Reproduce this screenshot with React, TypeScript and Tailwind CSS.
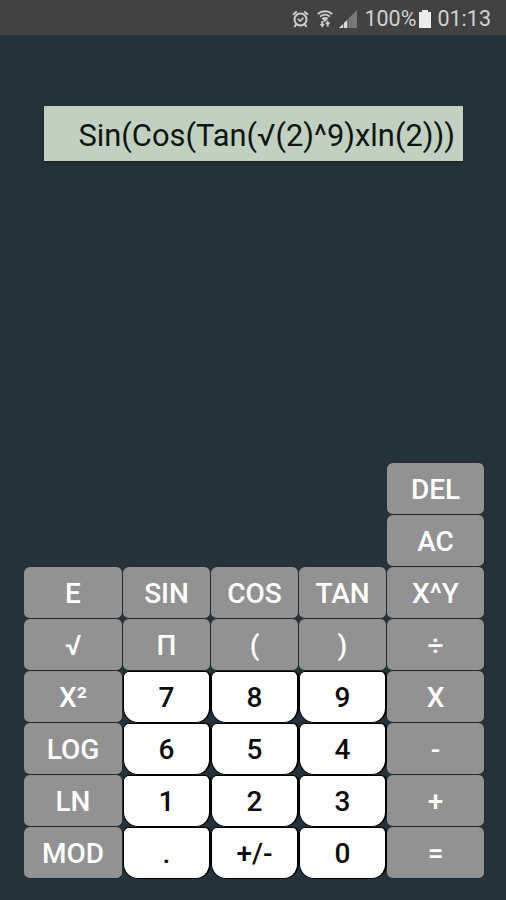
import clsx from "clsx";

type Key = {
  label: string;
  variant?: "light" | "dark";
};

const dark = (label: string): Key => ({ label, variant: "dark" });
const light = (label: string): Key => ({ label, variant: "light" });

// null leaves an empty cell in the keypad
const rows: (Key | null)[][] = [
  [null, null, null, null, dark("DEL")],
  [null, null, null, null, dark("AC")],
  [dark("E"), dark("SIN"), dark("COS"), dark("TAN"), dark("X^Y")],
  [dark("√"), dark("Π"), dark("("), dark(")"), dark("÷")],
  [dark("X²"), light("7"), light("8"), light("9"), dark("X")],
  [dark("LOG"), light("6"), light("5"), light("4"), dark("-")],
  [dark("LN"), light("1"), light("2"), light("3"), dark("+")],
  [dark("MOD"), light("."), light("+/-"), light("0"), dark("=")],
];

function AlarmIcon() {
  return (
    <svg width="17" height="18" viewBox="0 0 17 18" fill="none" stroke="#cdcdcd">
      <circle cx="8.5" cy="9.5" r="6" strokeWidth="2" />
      <path d="M1 4.8 4.8 1.4M16 4.8l-3.8-3.4M4.2 14.4 2.4 17M12.8 14.4l1.8 2.6" strokeWidth="2" />
      <path d="m5.8 8.8 2.3 2.3 3.4-3.4" strokeWidth="1.6" />
    </svg>
  );
}

function WifiIcon() {
  return (
    <svg width="16" height="18" viewBox="0 0 16 18" fill="none" stroke="#cdcdcd">
      <path d="M.8 4C4.8.4 11.2.4 15.2 4" strokeWidth="2" />
      <path d="M3 6.6c3-2.4 7-2.4 10 0" strokeWidth="1.7" />
      <path d="M4.6 8.2c2-1.6 4.8-1.6 6.8 0L8 12.2z" fill="#cdcdcd" stroke="none" />
      <path d="M5.3 11v4M10.7 12.6v4" strokeWidth="2" />
      <path d="M2.8 14h5l-2.5 3.8zM8.2 14h5l-2.5-3.6z" fill="#cdcdcd" stroke="none" />
    </svg>
  );
}

function SignalIcon() {
  return (
    <svg width="18" height="18" viewBox="0 0 18 18">
      <path d="M0 18 18 0v18z" fill="#787878" />
      <path d="M0 18 8.6 9.4V18z" fill="#dcdcdc" />
      <path d="M4.4 12v6M8.8 8v10" stroke="#424242" strokeWidth=".8" />
    </svg>
  );
}

function BatteryIcon() {
  return (
    <svg width="12" height="18" viewBox="0 0 12 18" fill="#ececec">
      <path d="M3 0h6v2h3v16H0V2h3z" />
    </svg>
  );
}

function StatusBar() {
  return (
    <header className="flex h-[35px] items-center justify-end bg-[#424242] pr-[15px] pt-[2px] text-[21.5px] leading-none text-[#d2d2d2]">
      <AlarmIcon />
      <span className="ml-[8px]">
        <WifiIcon />
      </span>
      <span className="ml-[6px]">
        <SignalIcon />
      </span>
      <span className="ml-[7px]">100%</span>
      <span className="ml-[3px]">
        <BatteryIcon />
      </span>
      <span className="ml-[6px]">01:13</span>
    </header>
  );
}

function KeyButton({ label, variant }: Key) {
  return (
    <button
      className={clsx(
        "flex items-center justify-center pt-[2px] text-[28px] font-medium leading-none",
        variant === "light"
          ? "rounded-t-[6px] rounded-b-[15px] border border-r-2 border-black bg-[#fdfdfd] text-[#0c0c0c]"
          : "rounded-[6px] border-r border-b border-[#20282c] bg-[#929292] text-white"
      )}
    >
      {label}
    </button>
  );
}

export default function App() {
  return (
    <div className="flex h-[900px] w-[506px] flex-col bg-[#25323a] font-[Roboto,sans-serif]">
      <StatusBar />

      <div className="mt-[71px] mr-[43px] ml-[44px] flex h-[55px] items-center justify-end bg-[#c1d0c1] pt-[5px] pr-[8px] text-[30.85px] leading-none text-[#101510] shadow-[0_1px_2px_#151d20]">
        Sin(Cos(Tan(√(2)^9)xln(2)))
      </div>

      <div className="mt-auto mb-[21px] ml-[24px] grid w-[461px] auto-rows-[52px] grid-cols-[99px_88px_88px_88px_98px]">
        {rows.flat().map((key, i) =>
          key ? <KeyButton key={i} {...key} /> : <div key={i} />
        )}
      </div>
    </div>
  );
}
